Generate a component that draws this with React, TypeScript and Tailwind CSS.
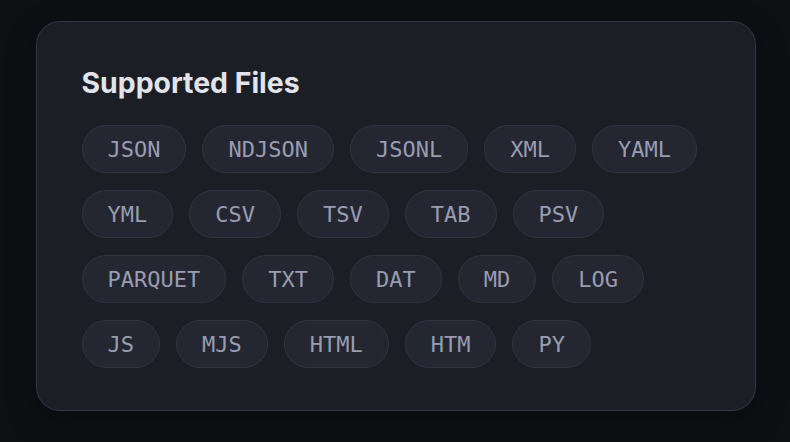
const FORMATS = [
  "JSON", "NDJSON", "JSONL", "XML", "YAML",
  "YML", "CSV", "TSV", "TAB", "PSV",
  "PARQUET", "TXT", "DAT", "MD", "LOG",
  "JS", "MJS", "HTML", "HTM", "PY",
];

export default function App() {
  return (
    <div className="flex h-[442px] w-[790px] items-start bg-[#0e1014] pl-[36px] pt-[21px] font-['Inter',sans-serif]">
      <section className="w-[720px] rounded-[24px] border-[1.5px] border-[#343846] bg-[#1c1e26] px-[44.5px] pb-[42px] pt-[43px] shadow-[0_10px_30px_rgba(0,0,0,0.35)]">
        <h2 className="text-[28.4px] font-bold leading-9 text-[#e2e4ec]">
          Supported Files
        </h2>
        <ul className="mt-[24px] flex flex-wrap gap-x-4 gap-y-[17px]">
          {FORMATS.map((f) => (
            <li
              key={f}
              className="flex h-[48px] items-center rounded-full border-[1.5px] border-[#31343f] bg-[#242731] px-[25px] font-['DejaVu_Sans_Mono',monospace] text-[22px] text-[#989db2]"
            >
              {f}
            </li>
          ))}
        </ul>
      </section>
    </div>
  );
}
